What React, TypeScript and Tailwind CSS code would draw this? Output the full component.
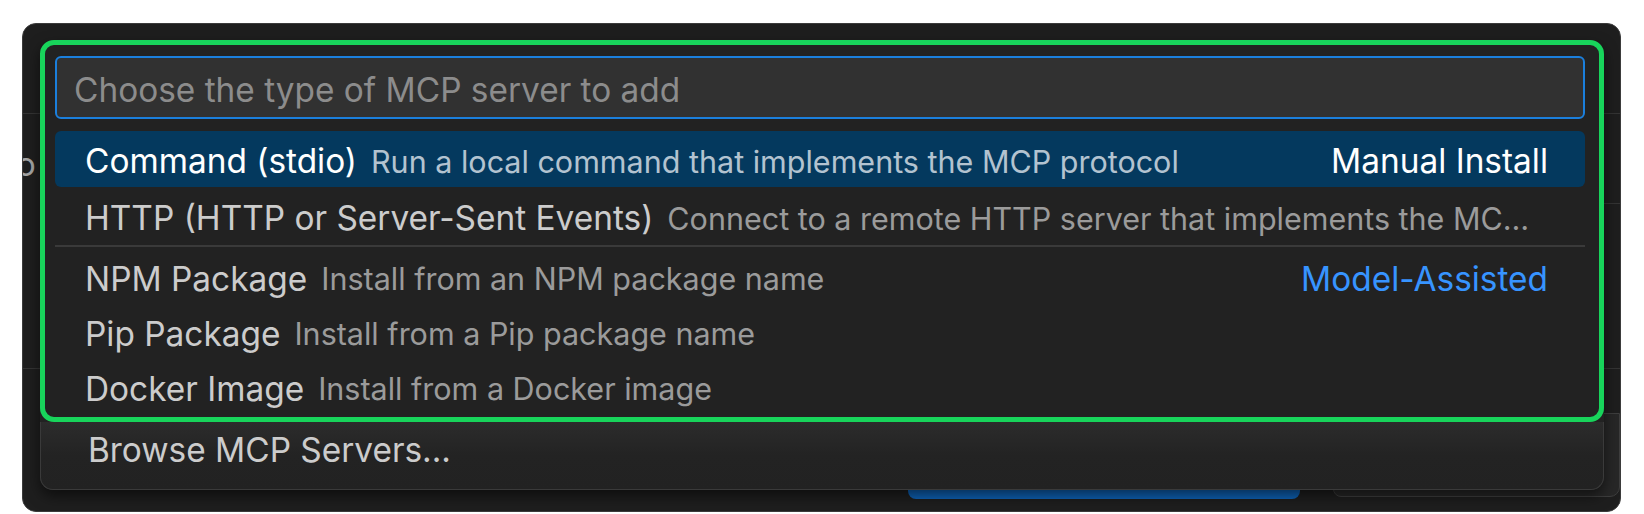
type Option = {
  label: string;
  desc: string;
  right?: string;
};

const manual: Option[] = [
  {
    label: "Command (stdio)",
    desc: "Run a local command that implements the MCP protocol",
    right: "Manual Install",
  },
  {
    label: "HTTP (HTTP or Server-Sent Events)",
    desc: "Connect to a remote HTTP server that implements the MCP protocol",
  },
];

const assisted: Option[] = [
  { label: "NPM Package", desc: "Install from an NPM package name", right: "Model-Assisted" },
  { label: "Pip Package", desc: "Install from a Pip package name" },
  { label: "Docker Image", desc: "Install from a Docker image" },
];

const OptionRow = ({ opt, selected, h }: { opt: Option; selected?: boolean; h: string }) => {
  return (
    <div
      className={`flex items-center pt-[5px] pl-[30px] pr-[37px] rounded-[6px] whitespace-nowrap ${h} ${
        selected ? "bg-[#04395e]" : ""
      }`}
    >
      <span className={`text-[33.4px] shrink-0 ${selected ? "text-white" : "text-[#cccccc]"}`}>{opt.label}</span>
      <span
        className={`ml-[14px] text-[30.5px] min-w-0 overflow-hidden text-ellipsis ${
          selected ? "text-[#b3c3d0]" : "text-[#9b9b9b]"
        }`}
      >
        {opt.desc}
      </span>
      {opt.right && (
        <span
          className={`ml-auto pl-6 shrink-0 text-[33.4px] ${
            selected ? "text-white" : "text-[#3794ff]"
          }`}
        >
          {opt.right}
        </span>
      )}
    </div>
  );
};

export default function App() {
  return (
    <div className="w-[1644px] h-[514px] bg-white pt-[23px] pl-[22px] font-['Inter',sans-serif] antialiased">
      <div className="grid w-[1599px] h-[489px] rounded-[14px] border border-[#3b3b3b] bg-[#1e1e1e] overflow-hidden">
        {/* dialog behind the quick pick */}
        <div className="col-start-1 row-start-1 flex flex-col">
          <div className="h-[89px]" />
          <div className="h-px bg-[#343434]" />
          <div className="h-[26px]" />
          <div className="h-[40px] leading-[40px] pt-[4px] text-[33px] text-[#a3a3a3] -ml-[7px]">o</div>
          <div className="h-[23px]" />
          <div className="flex justify-end">
            <div className="w-[30px] h-px bg-[#343434]" />
          </div>
          <div className="h-[164px]" />
          <div className="h-px bg-[#343434]" />
          <div className="h-[44px]" />
          <div className="flex items-end h-[86px]">
            <div className="w-[885px] shrink-0" />
            <div className="w-[392px] h-[40px] rounded-b-[8px] bg-[#0e63b8] shrink-0" />
            <div className="w-[33px] shrink-0" />
            <div className="flex-1 self-start h-[84px] rounded-bl-[8px] rounded-br-[10px] border border-[#3e3e3e] bg-[#272727]" />
          </div>
        </div>

        {/* quick pick */}
        <div className="col-start-1 row-start-1 pl-[17px] pt-[16px]">
          <div className="w-[1564px] h-[450px] flex flex-col rounded-[13px] bg-[#222222] shadow-[0_6px_14px_rgba(0,0,0,0.55)]">
            <div className="h-[382px] rounded-[14px] border-[5px] border-[#18d45b] pt-[11px] pl-[10px] pr-[14px] pb-[3px] flex flex-col">
              <input
                readOnly
                placeholder="Choose the type of MCP server to add"
                className="h-[63px] shrink-0 rounded-[6px] border-2 border-[#1b7fdc] bg-[#313131] pt-[5px] pl-[17px] text-[33.4px] text-white placeholder:text-[#8c8c8c] outline-none font-['Inter',sans-serif]"
              />
              <div className="h-[12px] shrink-0" />
              <OptionRow opt={manual[0]} selected h="h-[56px]" />
              <div className="pr-[8px] h-[58px] flex">
                <div className="flex-1 min-w-0">
                  <OptionRow opt={manual[1]} h="h-[58px]" />
                </div>
              </div>
              <div className="h-[2px] bg-[#3a3a3a] shrink-0" />
              <div className="h-[2px] shrink-0" />
              {assisted.map((opt) => (
                <OptionRow key={opt.label} opt={opt} h="h-[55px]" />
              ))}
            </div>
            <div className="flex-1 flex flex-col rounded-b-[13px] border-x border-b border-[#3a3a3a] bg-gradient-to-b from-[#2c2c2c] via-[#232323] to-[#222222]">
              <div className="h-[57px] flex items-center pl-[47px] text-[33.4px] text-[#cccccc]">
                Browse MCP Servers...
              </div>
            </div>
          </div>
        </div>
      </div>
    </div>
  );
}
